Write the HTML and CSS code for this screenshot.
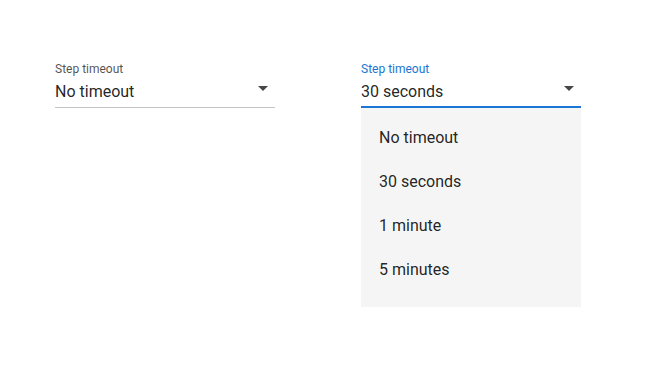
FILE: index.html
```html
<!DOCTYPE html>
<html>
<head>
<meta charset="utf-8">
<link rel="stylesheet" href="styles.css">
</head>
<body>
<div class="page">
  <div class="field">
    <div class="label">Step timeout</div>
    <div class="control">
      <span class="value">No timeout</span>
      <svg class="arrow" width="24" height="24" viewBox="0 0 24 24"><path d="M7 10l5 5 5-5z"/></svg>
    </div>
  </div>
  <div class="field focused">
    <div class="label">Step timeout</div>
    <div class="control">
      <span class="value">30 seconds</span>
      <svg class="arrow" width="24" height="24" viewBox="0 0 24 24"><path d="M7 10l5 5 5-5z"/></svg>
    </div>
    <div class="menu">
      <div class="item">No timeout</div>
      <div class="item">30 seconds</div>
      <div class="item">1 minute</div>
      <div class="item">5 minutes</div>
    </div>
  </div>
</div>
</body>
</html>
```
FILE: styles.css
```css
html, body {
  margin: 0;
  padding: 0;
  background: #fff;
  font-family: Roboto, "Liberation Sans", sans-serif;
}
.page {
  display: flex;
  align-items: flex-start;
  gap: 86px;
  padding: 61px 0 0 55px;
}
.field {
  display: flex;
  flex-direction: column;
  width: 220px;
}
.label {
  font-size: 12px;
  line-height: 16px;
  color: rgba(0, 0, 0, 0.7);
}
.control {
  display: flex;
  align-items: center;
  justify-content: space-between;
  margin-top: 3px;
  padding-bottom: 3px;
  border-bottom: 1px solid #c4c4c4;
  height: 24px;
}
.value {
  font-size: 16px;
  line-height: 24px;
  color: rgba(0, 0, 0, 0.87);
}
.arrow {
  fill: rgba(0, 0, 0, 0.72);
  margin-top: -8px;
  display: block;
}
.focused .label {
  color: #1976d2;
}
.focused .control {
  border-bottom: 2px solid #1976d2;
  padding-bottom: 2px;
}
.menu {
  width: 220px;
  padding: 8px 0 15px;
  background: #f5f5f5;
}
.item {
  font-size: 16px;
  line-height: 24px;
  padding: 10px 18px;
  color: rgba(0, 0, 0, 0.87);
}
```
